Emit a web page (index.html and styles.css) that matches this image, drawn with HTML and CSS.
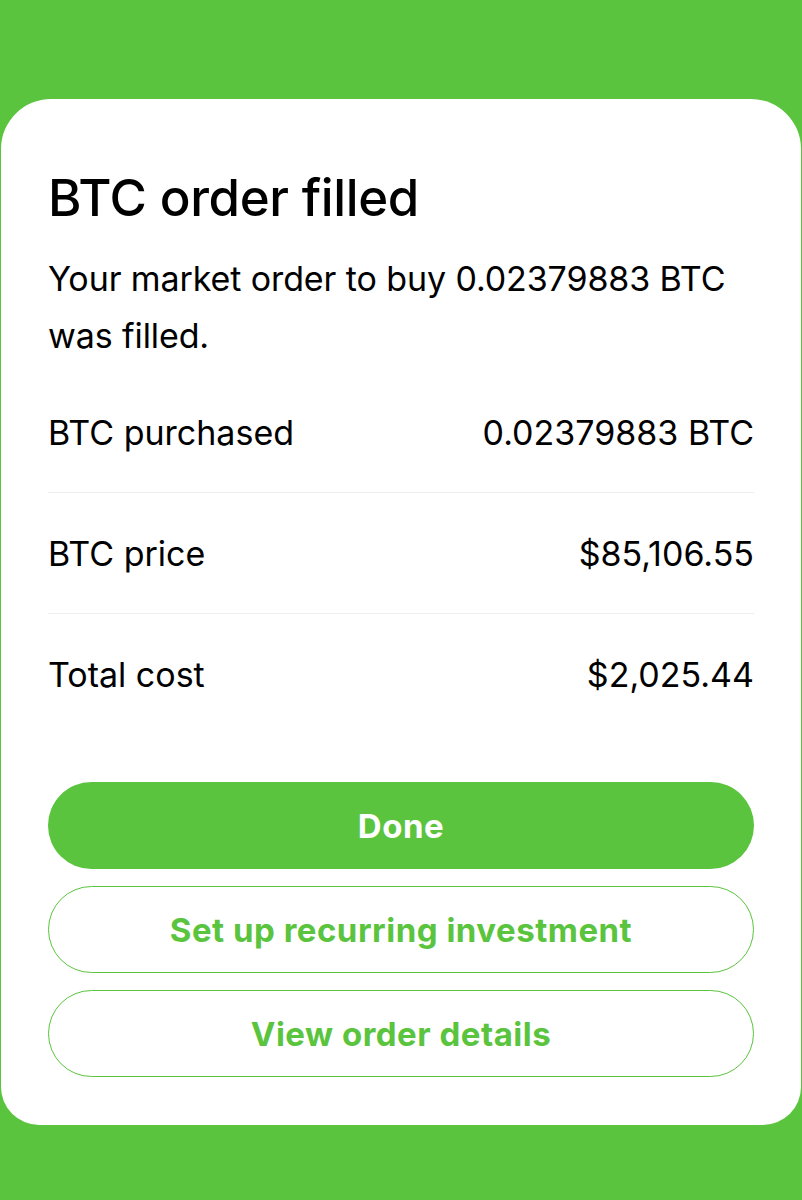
FILE: index.html
```html
<!DOCTYPE html>
<html lang="en">
<head>
<meta charset="utf-8">
<title>BTC order filled</title>
<link rel="stylesheet" href="styles.css">
</head>
<body>
<main class="sheet">
  <h1 class="title">BTC order filled</h1>
  <p class="message">Your market order to buy 0.02379883 BTC was filled.</p>
  <div class="rows">
    <div class="row"><span class="label">BTC purchased</span><span class="value">0.02379883 BTC</span></div>
    <div class="row"><span class="label">BTC price</span><span class="value">$85,106.55</span></div>
    <div class="row"><span class="label">Total cost</span><span class="value">$2,025.44</span></div>
  </div>
  <div class="actions">
    <button class="btn btn-primary" type="button">Done</button>
    <button class="btn btn-outline" type="button">Set up recurring investment</button>
    <button class="btn btn-outline" type="button">View order details</button>
  </div>
</main>
</body>
</html>
```
FILE: styles.css
```css
html, body {
  margin: 0;
  padding: 0;
}
body {
  background: #5bc43e;
  height: 1200px;
  padding-top: 99px;
  box-sizing: border-box;
  font-family: Inter, "Liberation Sans", sans-serif;
  color: #000;
}
.sheet {
  margin: 0 1px;
  height: 1026px;
  box-sizing: border-box;
  background: #fff;
  border-radius: 50px 50px 38px 38px;
  padding: 69px 47px 48px 47px;
  display: flex;
  flex-direction: column;
}
.title {
  margin: 0;
  font-size: 51px;
  line-height: 60px;
  font-weight: 500;
  letter-spacing: -0.4px;
}
.message {
  margin: 22px 0 0 0;
  font-size: 34px;
  line-height: 57px;
  font-weight: 400;
  letter-spacing: -0.1px;
}
.rows {
  display: flex;
  flex-direction: column;
  margin-top: 8px;
}
.row {
  height: 120px;
  display: flex;
  align-items: center;
  justify-content: space-between;
  font-size: 34px;
  border-bottom: 1px solid #eeeeee;
}
.row:last-child {
  border-bottom: none;
}
.actions {
  margin-top: 48px;
  display: flex;
  flex-direction: column;
  gap: 17px;
}
.btn {
  height: 87px;
  border-radius: 44px;
  font-family: Inter, "Liberation Sans", sans-serif;
  font-weight: 700;
  font-size: 33px;
  letter-spacing: 0.5px;
  cursor: pointer;
  box-sizing: border-box;
}
.btn-primary {
  background: #5bc43e;
  color: #fff;
  border: none;
}
.btn-outline {
  background: #fff;
  color: #5bc43e;
  border: 1.5px solid #5bc43e;
}
```
